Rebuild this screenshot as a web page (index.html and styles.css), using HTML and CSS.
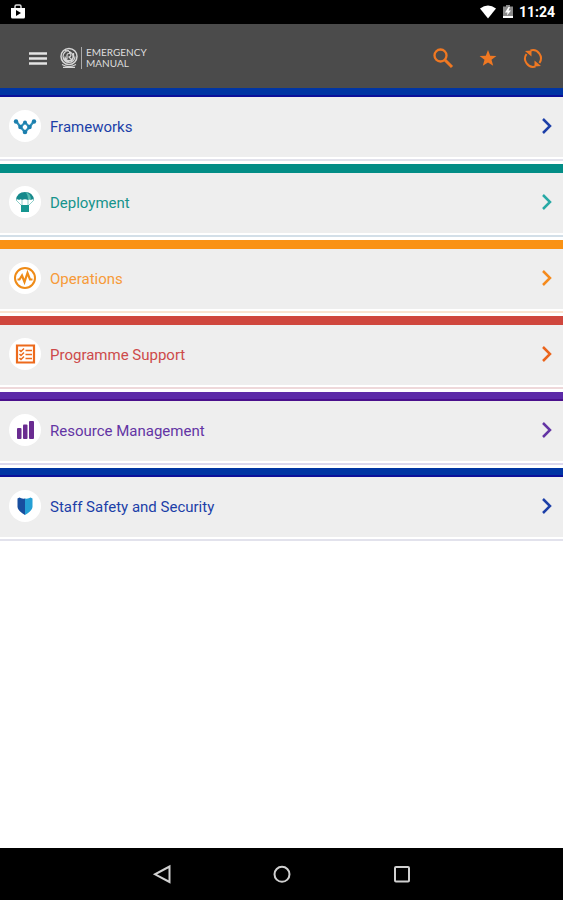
FILE: index.html
```html
<!DOCTYPE html>
<html lang="en">
<head>
  <meta charset="UTF-8" />
  <title>Emergency Manual</title>
  <meta name="viewport" content="width=device-width, initial-scale=1.0" />
  <link rel="stylesheet" href="styles.css">
</head>
<body>

  <div class="status-bar">
    <svg class="store-icon" width="16" height="16" viewBox="0 0 16 16">
      <path d="M5 5V2.500Q5 1 6.500 1h3Q11 1 11 2.500V5" fill="none" stroke="#ddd" stroke-width="1.500" />
      <path d="M1 4h14v9q0 1.500-1.500 1.500h-11Q1 14.500 1 13z" fill="#fff" />
      <path d="M6 6l5 3-5 3z" fill="#000" />
    </svg>
    <div class="status-right">
      <svg width="18" height="16" viewBox="0 0 18 16">
        <path d="M1 4.500Q9-1.500 17 4.500L9 14.500z" fill="#fff" />
      </svg>
      <svg width="10" height="16" viewBox="0 0 10 16">
        <path d="M0 2.500h3V1h4v1.500h3V14H0z" fill="#8a8a8a" />
        <path d="M5.500 3L2 8.500h2.500L4 11.500 8 6.500H5.500L7 3zM0 12h10v2H0z" fill="#fff" />
      </svg>
      <span class="clock">11:24</span>
    </div>
  </div>

  <header class="navbar">
    <button class="icon-btn" aria-label="Menu">
      <svg width="24" height="24" viewBox="0 0 24 24">
        <path d="M3 7.500h18M3 12.500h18M3 17.500h18" stroke="#e4e4e4" stroke-width="2.500" />
      </svg>
    </button>
    <a href="#" class="brand">
      <svg width="20" height="22" viewBox="0 0 20 22" fill="none" stroke="#d6d6d6">
        <circle cx="10" cy="9.500" r="8" stroke-width="1.500" />
        <path d="M10 3.500a6 6 0 1 0 6 6M10 5.500a4 4 0 1 1-4 4M6 3.500q5 0 8 4M14.500 6q1 5-3 8.500M4 10q2 4 7 5M8 12V8q0-1.500 2-1.500t2 1.500-2 2l3 3" stroke-width="1.200" />
        <path d="M3 17.500q7 4 14 0M4 20.300h12" stroke-width="1.200" />
      </svg>
      <span class="brand-text"><span>EMERGENCY</span><span>MANUAL</span></span>
    </a>
    <div class="actions">
      <button class="icon-btn" aria-label="Search">
        <svg width="24" height="24" viewBox="0 0 24 24" fill="none" stroke="#f07822">
          <circle cx="9.500" cy="9.500" r="6" stroke-width="2.300" />
          <path d="M14 14l7 7" stroke-width="3" />
        </svg>
      </button>
      <button class="icon-btn" aria-label="Favourites">
        <svg width="24" height="24" viewBox="0 0 24 24" fill="#f07822">
          <path d="M12 4l2.200 5.700 6.200.3-4.900 3.800 1.700 6L12 16.500l-5.200 3.300 1.700-6L3.600 10l6.200-.3z" />
        </svg>
      </button>
      <button class="icon-btn" aria-label="Refresh">
        <svg width="24" height="24" viewBox="0 0 24 24" fill="none" stroke="#f07822" stroke-width="2">
          <path d="M9.500 4.500a8.200 8.200 0 0 1 9 12.500M14.500 20.500a8.200 8.200 0 0 1-9-12.500" />
          <path d="M4 5l6.500-.5v6zM20 20l-6.500.5v-6z" fill="#f07822" stroke="none" />
        </svg>
      </button>
    </div>
  </header>

  <main>
    <a href="#" class="section frameworks">
      <span class="section-row">
        <span class="badge">
          <svg width="24" height="24" viewBox="0 0 24 24" fill="#1c7fae">
            <path d="M3 7l4.500 6L12 8.500l4.500 4.500L21 7M7.500 13l4.500 5 4.500-5" fill="none" stroke="#2d8fb8" stroke-width="2.200" />
            <circle cx="3" cy="7.500" r="2.200" /><circle cx="21" cy="7.500" r="2.200" /><circle cx="12" cy="8.500" r="2" />
            <circle cx="7.500" cy="13" r="2.300" /><circle cx="16.500" cy="13" r="2.300" /><circle cx="12" cy="18" r="2.300" />
          </svg>
        </span>
        <span class="section-title">Frameworks</span>
        <svg class="chevron" width="14" height="18" viewBox="0 0 14 18"><path d="M3 2l7 7-7 7" /></svg>
      </span>
    </a>

    <a href="#" class="section deployment">
      <span class="section-row">
        <span class="badge">
          <svg width="24" height="24" viewBox="0 0 24 24">
            <path d="M3 10l6 6M21 10l-6 6M9 10v5M15 10v5" stroke="#8fcfca" fill="none" />
            <path d="M3 10Q4 2 12 2t9 8q-1.500-1.500-3 0-1.500-1.500-3 0-3-1.500-6 0-1.500-1.500-3 0-1.500-1.500-3 0z" fill="#16898c" />
            <path d="M12 2q6 1 6 8-1.500-1.500-3 0 0-6-3-8z" fill="#55b9ae" />
            <path d="M8 15h8v7H8z" fill="#159690" />
          </svg>
        </span>
        <span class="section-title">Deployment</span>
        <svg class="chevron" width="14" height="18" viewBox="0 0 14 18"><path d="M3 2l7 7-7 7" /></svg>
      </span>
    </a>

    <a href="#" class="section operations">
      <span class="section-row">
        <span class="badge">
          <svg width="24" height="24" viewBox="0 0 24 24" fill="none" stroke="#ef8b17">
            <circle cx="12" cy="12" r="10" stroke-width="2" />
            <path d="M4.500 13.500h2L9 9.500l2.500 6.500 3-9 2.500 6.500h2.500" stroke-width="2.200" />
          </svg>
        </span>
        <span class="section-title">Operations</span>
        <svg class="chevron" width="14" height="18" viewBox="0 0 14 18"><path d="M3 2l7 7-7 7" /></svg>
      </span>
    </a>

    <a href="#" class="section programme">
      <span class="section-row">
        <span class="badge">
          <svg width="24" height="24" viewBox="0 0 24 24" fill="none" stroke="#ed6a1c">
            <path d="M4 3.500h17v17H4z" stroke-width="2.200" />
            <path d="M6.500 8l1.500 1.500L11 6.500M6.500 12l1.500 1.500 3-3M6.500 16l1.500 1.500 3-3M12.500 8.500H19M12.500 12.500H19M12.500 16.500H19" stroke-width="1.500" />
          </svg>
        </span>
        <span class="section-title">Programme Support</span>
        <svg class="chevron" width="14" height="18" viewBox="0 0 14 18"><path d="M3 2l7 7-7 7" /></svg>
      </span>
    </a>

    <a href="#" class="section resource">
      <span class="section-row">
        <span class="badge">
          <svg width="24" height="24" viewBox="0 0 24 24" fill="#6a2c91">
            <rect x="4" y="10" width="4.500" height="11" rx="1" />
            <rect x="10" y="6.500" width="4.500" height="14.500" rx="1" />
            <rect x="16" y="3" width="5" height="18" rx="1" />
          </svg>
        </span>
        <span class="section-title">Resource Management</span>
        <svg class="chevron" width="14" height="18" viewBox="0 0 14 18"><path d="M3 2l7 7-7 7" /></svg>
      </span>
    </a>

    <a href="#" class="section safety">
      <span class="section-row">
        <span class="badge">
          <svg width="24" height="24" viewBox="0 0 24 24">
            <path d="M12 4.500Q8.500 5 6.500 3.500l-2 1V13q.5 4 7.500 8z" fill="#184e9f" />
            <path d="M12 4.500q3.500.5 5.500-1l2 1V13q-.5 4-7.500 8z" fill="#25a0d5" />
          </svg>
        </span>
        <span class="section-title">Staff Safety and Security</span>
        <svg class="chevron" width="14" height="18" viewBox="0 0 14 18"><path d="M3 2l7 7-7 7" /></svg>
      </span>
    </a>
  </main>

  <nav class="system-nav">
    <button class="icon-btn" aria-label="Back">
      <svg width="24" height="24" viewBox="0 0 24 24"><path d="M19.500 4.500v15.500L5 12.300z" /></svg>
    </button>
    <button class="icon-btn" aria-label="Home">
      <svg width="24" height="24" viewBox="0 0 24 24"><circle cx="12" cy="12.300" r="7.500" /></svg>
    </button>
    <button class="icon-btn" aria-label="Recent apps">
      <svg width="24" height="24" viewBox="0 0 24 24"><rect x="5" y="5" width="14" height="14.500" rx="1" /></svg>
    </button>
  </nav>

</body>
</html>
```
FILE: styles.css
```css
* { box-sizing: border-box; }
body {
  font-family: Roboto, Arial, sans-serif; background: #fff; margin: 0;
  min-height: 100vh; display: flex; flex-direction: column;
}
svg { display: block; }
a { text-decoration: none; }

.status-bar {
  display: flex; justify-content: space-between; align-items: center;
  height: 24px; padding: 0 8px 0 10px; background: #000; color: #fff;
}
.status-right { display: flex; align-items: center; gap: 6px; }
.clock { font-size: 14px; font-weight: 700; line-height: 24px; }

.navbar {
  display: flex; align-items: center;
  height: 64px; padding: 4px 18px 0 26px; background: #4b4b4b;
}
.icon-btn { padding: 0; border: none; background: none; cursor: pointer; }
.brand { display: flex; align-items: center; gap: 2px; margin-left: 9px; }
.brand-text {
  display: flex; flex-direction: column;
  border-left: 1px solid #aaa; padding-left: 4px; color: #dedede;
  font-family: Lato, "Open Sans", sans-serif; font-size: 10px; line-height: 11px;
}
.actions { display: flex; gap: 21px; margin-left: auto; }

main { flex: 1; }

.section { display: block; height: 76px; border-top: 9px solid; }
.section-row {
  display: flex; align-items: center;
  height: 60px; padding: 0 9px; background: #eee;
}
.section::after {
  content: ""; display: block; height: 2px; margin-top: 2px; background: #e2e2ec;
}
.badge {
  display: flex; align-items: center; justify-content: center;
  width: 32px; height: 32px; margin-bottom: 2px; border-radius: 50%; background: #fff;
}
.section-title { flex: 1; margin-left: 9px; font-size: 15px; line-height: 20px; }
.chevron { fill: none; stroke: currentColor; stroke-width: 2.5; margin-bottom: 2px; }

.frameworks, .safety { border-color: #0035a4; color: #1c3fa8; }
.frameworks .section-row, .safety .section-row { box-shadow: 0 -2px #0c109a; }
.deployment { border-color: #028d86; color: #16948c; }
.deployment .chevron { color: #27a9a5; }
.deployment::after { background: #d3dfe8; }
.operations { border-color: #fa9214; color: #f79a38; }
.operations .chevron { color: #f58a1c; }
.operations::after { background: #fbe3d0; }
.programme { border-color: #cf463d; color: #cd4a4a; }
.programme .chevron { color: #ea641c; }
.programme::after { background: #eed8da; }
.resource { border-color: #5c2aa8; color: #6334a4; }
.resource .section-row { box-shadow: 0 -2px #4a108c; }
.resource::after { background: #dcd8ee; }

.system-nav {
  display: flex; justify-content: center; align-items: center; gap: 96px;
  height: 52px; background: #000;
}
.system-nav svg { fill: none; stroke: #d0d0d0; stroke-width: 2; }
```
